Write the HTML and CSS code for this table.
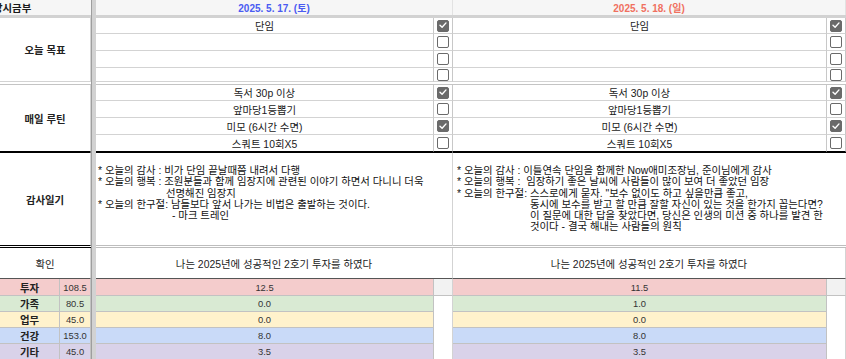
FILE: index.html
```html
<!DOCTYPE html>
<html lang="ko">
<head>
<meta charset="utf-8">
<title>Sheet</title>
<link rel="stylesheet" href="styles.css">
</head>
<body>
<div class="sheet">
  <div class="vband"></div>

  <!-- header -->
  <div class="c hd hd-a"><span class="clip">상시금부</span></div>
  <div class="c hd date sat">2025. 5. 17. (토)</div>
  <div class="c hd date sun">2025. 5. 18. (일)</div>

  <div class="hband s2"></div>
  <div class="hband s4"></div>

  <!-- goals -->
  <div class="c lab s2 rs4">오늘 목표</div>
  <div class="c tx">단임</div>
  <div class="c cbc"><span class="cb on"><svg viewBox="0 0 12 12"><path d="M3 6.3 L5.1 8.3 L9 3.9"/></svg></span></div>
  <div class="c tx">단임</div>
  <div class="c cbc"><span class="cb on"><svg viewBox="0 0 12 12"><path d="M3 6.3 L5.1 8.3 L9 3.9"/></svg></span></div>

  <div class="c tx"></div>
  <div class="c cbc"><span class="cb"></span></div>
  <div class="c tx"></div>
  <div class="c cbc"><span class="cb"></span></div>

  <div class="c tx"></div>
  <div class="c cbc"><span class="cb"></span></div>
  <div class="c tx"></div>
  <div class="c cbc"><span class="cb"></span></div>

  <div class="c tx"></div>
  <div class="c cbc"><span class="cb"></span></div>
  <div class="c tx"></div>
  <div class="c cbc"><span class="cb"></span></div>

  <div class="sep s2"></div>
  <div class="sep s4"></div>

  <!-- routine -->
  <div class="c lab s2 rs4 blk">매일 루틴</div>
  <div class="c tx">독서 30p 이상</div>
  <div class="c cbc"><span class="cb on"><svg viewBox="0 0 12 12"><path d="M3 6.3 L5.1 8.3 L9 3.9"/></svg></span></div>
  <div class="c tx">독서 30p 이상</div>
  <div class="c cbc"><span class="cb on"><svg viewBox="0 0 12 12"><path d="M3 6.3 L5.1 8.3 L9 3.9"/></svg></span></div>

  <div class="c tx">앞마당1등뽑기</div>
  <div class="c cbc"><span class="cb"></span></div>
  <div class="c tx">앞마당1등뽑기</div>
  <div class="c cbc"><span class="cb"></span></div>

  <div class="c tx">미모 (6시간 수면)</div>
  <div class="c cbc"><span class="cb on"><svg viewBox="0 0 12 12"><path d="M3 6.3 L5.1 8.3 L9 3.9"/></svg></span></div>
  <div class="c tx">미모 (6시간 수면)</div>
  <div class="c cbc"><span class="cb on"><svg viewBox="0 0 12 12"><path d="M3 6.3 L5.1 8.3 L9 3.9"/></svg></span></div>

  <div class="c tx blk">스쿼트 10회X5</div>
  <div class="c cbc blk"><span class="cb"></span></div>
  <div class="c tx blk">스쿼트 10회X5</div>
  <div class="c cbc blk"><span class="cb"></span></div>

  <!-- gratitude -->
  <div class="c lab s2 diary-a">감사일기</div>
  <div class="c s2 diary dl">
    <div class="ln">* 오늘의 감사 : 비가 단임 끝날때쯤 내려서 다행</div>
    <div class="ln">* 오늘의 행복 : 조원분들과 함께 임장지에 관련된 이야기 하면서 다니니 더욱</div>
    <div class="ln ind1">선명해진 임장지</div>
    <div class="ln">* 오늘의 한구절: 남들보다 앞서 나가는 비법은 출발하는 것이다.</div>
    <div class="ln ind2">- 마크 트레인</div>
  </div>
  <div class="c s2 diary dr">
    <div class="ln">* 오늘의 감사 : 이틀연속 단임을 함께한 Now애미조장님, 준이님에게 감사</div>
    <div class="ln">* 오늘의 행복 :  임장하기 좋은 날씨에 사람들이 많이 보여 더 좋았던 임장</div>
    <div class="ln">* 오늘의 한구절: 스스로에게 묻자. "보수 없이도 하고 싶을만큼 좋고,</div>
    <div class="ln ind3">동시에 보수를 받고 할 만큼 잘할 자신이 있는 것을 한가지 꼽는다면?</div>
    <div class="ln ind3">이 질문에 대한 답을 찾았다면, 당신은 인생의 미션 중 하나를 발견 한</div>
    <div class="ln ind3">것이다 - 결국 해내는 사람들의 원칙</div>
  </div>

  <div class="sep2 s2 sep2-a"></div>
  <div class="sep2 s4"></div>

  <!-- confirm -->
  <div class="c s2 conf">확인</div>
  <div class="c s2 conf">나는 2025년에 성공적인 2호기 투자를 하였다</div>
  <div class="c s2 conf">나는 2025년에 성공적인 2호기 투자를 하였다</div>

  <!-- categories -->
  <div class="c cat red b">투자</div>
  <div class="c cat red">108.5</div>
  <div class="c cat red">12.5</div>
  <div class="c cat gap g">&nbsp;</div>
  <div class="c cat red">11.5</div>
  <div class="c cat gap g">&nbsp;</div>

  <div class="c cat grn b">가족</div>
  <div class="c cat grn">80.5</div>
  <div class="c cat grn">0.0</div>
  <div class="c cat gap">&nbsp;</div>
  <div class="c cat grn">1.0</div>
  <div class="c cat gap">&nbsp;</div>

  <div class="c cat yel b">업무</div>
  <div class="c cat yel">45.0</div>
  <div class="c cat yel">0.0</div>
  <div class="c cat gap">&nbsp;</div>
  <div class="c cat yel">0.0</div>
  <div class="c cat gap">&nbsp;</div>

  <div class="c cat blu b">건강</div>
  <div class="c cat blu">153.0</div>
  <div class="c cat blu">8.0</div>
  <div class="c cat gap">&nbsp;</div>
  <div class="c cat blu">8.0</div>
  <div class="c cat gap">&nbsp;</div>

  <div class="c cat pur b">기타</div>
  <div class="c cat pur">45.0</div>
  <div class="c cat pur">3.5</div>
  <div class="c cat gap">&nbsp;</div>
  <div class="c cat pur">3.5</div>
  <div class="c cat gap">&nbsp;</div>
</div>
</body>
</html>
```

FILE: styles.css
```css
html, body {
  margin: 0;
  padding: 0;
  background: #fff;
  overflow: hidden;
}

body {
  font-family: "Liberation Sans", "Noto Sans CJK KR", Arial, sans-serif;
  font-size: 10.4px;
  color: #1a1a1a;
}

.sheet {
  display: grid;
  width: 846px;
  grid-template-columns: 60px 31px 5px 338px 19px 374px 19px;
  grid-template-rows: 15px 3px 16px 17px 17px 14px 3px 16px 17px 17px 17px 94px 2px 31px 17px 16px 16px 16px 16px;
}

.vband {
  grid-column: 3;
  grid-row: 1 / -1;
  background: #d2d2d2;
  border-left: 1px solid #9e9e9e;
}

.c {
  box-sizing: border-box;
  border-right: 1px solid #d3d3d3;
  border-bottom: 1px solid #d3d3d3;
  display: flex;
  align-items: center;
  justify-content: center;
  white-space: nowrap;
  overflow: hidden;
  min-width: 0;
}

.s2 { grid-column: span 2; }
.s4 { grid-column: span 4; }
.rs4 { grid-row: span 4; }

/* header */
.hd {
  background: #f6f6f6;
  border-bottom: none;
  font-weight: bold;
}
.hd-a {
  grid-column: span 2;
  justify-content: flex-start;
  border-right: none;
}
.clip { margin-left: -7px; }
.date {
  grid-column: span 2;
  font-size: 10px;
  border-right: 1px solid #e2e2e2;
}
.sat { color: #4a5bf2; }
.sun { color: #f0705f; }

.hband {
  background: #d2d2d2;
}

/* goals / routine */
.lab {
  font-weight: bold;
  color: #222;
}
.tx {
  border-right: 1px solid #c8c8c8;
}
.cbc {
  border-right: 1px solid #c8c8c8;
}
.blk {
  border-bottom: 1px solid #000;
}

.cb {
  display: block;
  width: 12px;
  height: 12px;
  box-sizing: border-box;
  border: 1.5px solid #6a6a6a;
  border-radius: 2px;
  background: #fff;
}
.cb.on {
  background: #6a6a6a;
  border-color: #6a6a6a;
}
.cb svg {
  display: block;
  width: 12px;
  height: 12px;
  margin: -1.5px;
}
.cb svg path {
  fill: none;
  stroke: #fff;
  stroke-width: 1.4;
  stroke-linecap: round;
  stroke-linejoin: round;
}

.sep {
  box-sizing: border-box;
  border-bottom: 1px solid #c4c4c4;
  background: #fff;
}

/* diary */
.diary-a {
  border-top: 1px solid #000;
  border-bottom: 1px solid #000;
}
.diary {
  border-top: 1px solid #000;
  border-bottom: 1px solid #bdbdbd;
  display: block;
  padding-top: 12px;
  line-height: 11.3px;
  color: #111;
}
.dl { padding-left: 2px; }
.dr { padding-left: 4px; border-right: none; }
.ln { white-space: pre; }
.ind1 { padding-left: 68px; }
.ind2 { padding-left: 74px; }
.ind3 { padding-left: 73px; }

.sep2 {
  box-sizing: border-box;
  border-bottom: 1px solid #bdbdbd;
  background: #fff;
}
.sep2-a { border-bottom-color: #000; }

/* confirm */
.conf {
  border-bottom: 1px solid #555;
  color: #222;
}

/* categories */
.cat {
  border-bottom: 1px solid #c2c2c2;
  border-right: 1px solid #c2c2c2;
  color: #333;
  font-size: 9.4px;
}
.cat.b { font-weight: bold; color: #222; font-size: 10.4px; }
.red { background: #f4cccc; }
.grn { background: #d9ead3; }
.yel { background: #fff2cc; }
.blu { background: #c9daf8; }
.pur { background: #d9d2e9; }
.gap {
  background: #fff;
  border-bottom: none;
  border-right: 1px solid #d3d3d3;
}
.gap.g {
  background: #f2f2f2;
  border-bottom: 1px solid #c2c2c2;
}
```
